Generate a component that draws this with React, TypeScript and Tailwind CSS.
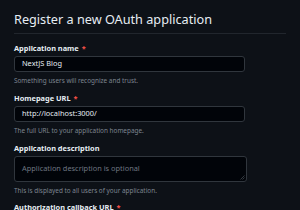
import React from "react";

const font = { fontFamily: '"Noto Sans", "Liberation Sans", sans-serif' };

function Label({ text, required }: { text: string; required?: boolean }) {
  return (
    <div className="h-[10px] text-[7.4px] leading-[10px] font-bold text-[#e6edf3] whitespace-nowrap">
      {text}
      {required && <span className="text-[#f85149] ml-[3px]">*</span>}
    </div>
  );
}

function Hint({ text }: { text: string }) {
  return (
    <div className="h-[9px] text-[6.4px] leading-[9px] text-[#7d8590] whitespace-nowrap">{text}</div>
  );
}

export default function App() {
  return (
    <div className="w-[300px] h-[210px] overflow-hidden bg-[#0d1117]" style={font}>
      <div className="pl-[14px] pr-[14px] pt-[11px]">
        <div className="pb-[6px] border-b border-[#21262d]">
          <div className="h-[16px] text-[12.7px] leading-[16px] text-[#e6edf3] whitespace-nowrap">
            Register a new OAuth application
          </div>
        </div>
        <div className="pt-[9px] flex flex-col">
          <Label text="Application name" required />
          <div className="mt-[3px] w-[231px] h-[16px] rounded-[3px] border border-[#30363d] bg-[#010409] pl-[7px] flex items-center text-[7.4px] text-[#e6edf3]">
            NextJS Blog
          </div>
          <div className="mt-[3.5px]">
            <Hint text="Something users will recognize and trust." />
          </div>
          <div className="mt-[8.5px]">
            <Label text="Homepage URL" required />
          </div>
          <div className="mt-[3px] w-[231px] h-[16px] rounded-[3px] border border-[#30363d] bg-[#010409] pl-[7px] flex items-center text-[7.4px] text-[#e6edf3]">
            http://localhost:3000/
          </div>
          <div className="mt-[3.5px]">
            <Hint text="The full URL to your application homepage." />
          </div>
          <div className="mt-[8.5px]">
            <Label text="Application description" />
          </div>
          <div className="relative mt-[3px] w-[233px] h-[26px] rounded-[3px] border border-[#30363d] bg-[#010409] pl-[7px] pt-[5.5px] text-[7.4px] leading-[10px] text-[#6e7681]">
            Application description is optional
            <svg className="absolute right-[1px] bottom-[1px]" width="5" height="5" viewBox="0 0 5 5">
              <path d="M4.5 0.5 L0.5 4.5 M4.5 2.5 L2.5 4.5" stroke="#484f58" strokeWidth="0.7" />
            </svg>
          </div>
          <div className="mt-[3.5px]">
            <Hint text="This is displayed to all users of your application." />
          </div>
          <div className="mt-[7px]">
            <Label text="Authorization callback URL" required />
          </div>
        </div>
      </div>
    </div>
  );
}
